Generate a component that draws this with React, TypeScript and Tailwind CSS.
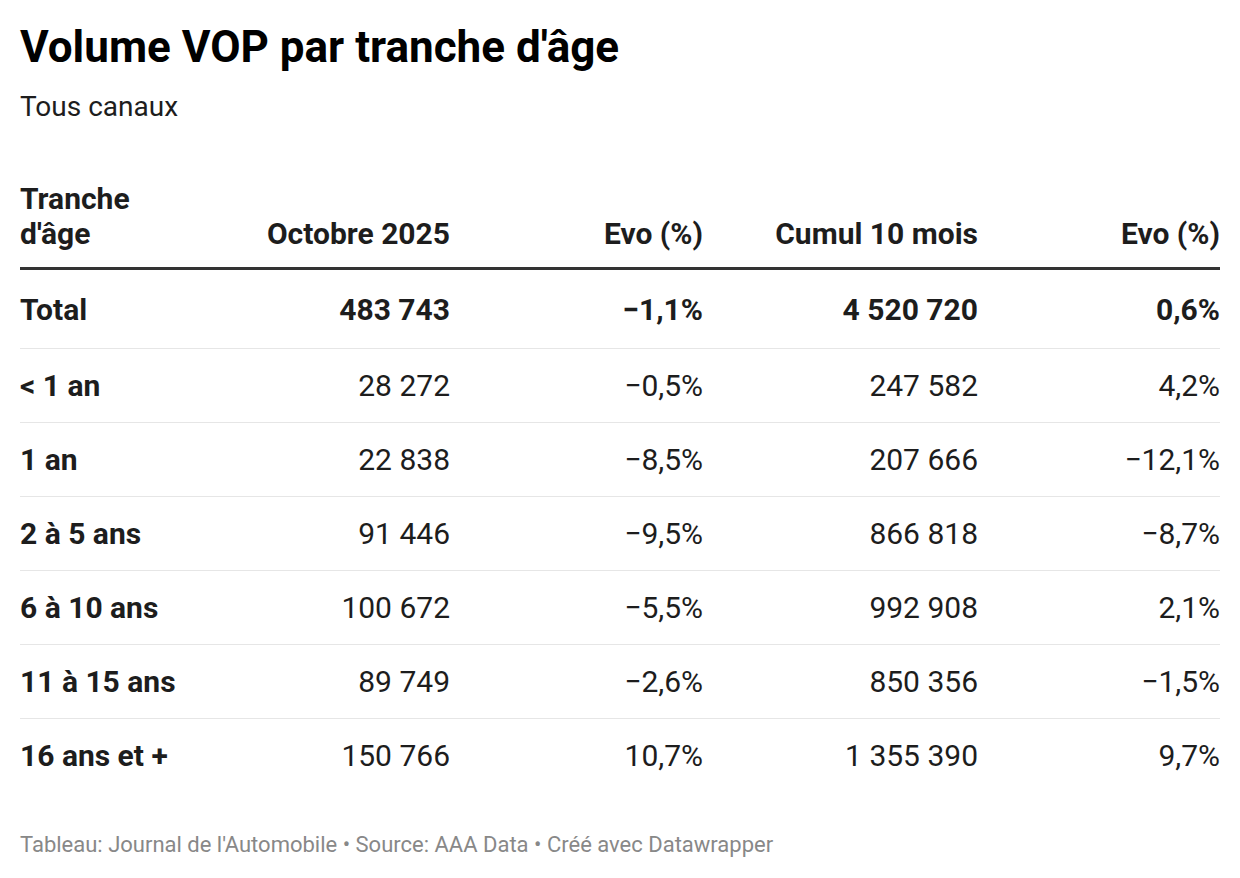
const ROWS = [
  { label: 'Total', oct: '483 743', evo: '−1,1%', cumul: '4 520 720', evo2: '0,6%', bold: true },
  { label: '< 1 an', oct: '28 272', evo: '−0,5%', cumul: '247 582', evo2: '4,2%' },
  { label: '1 an', oct: '22 838', evo: '−8,5%', cumul: '207 666', evo2: '−12,1%' },
  { label: '2 à 5 ans', oct: '91 446', evo: '−9,5%', cumul: '866 818', evo2: '−8,7%' },
  { label: '6 à 10 ans', oct: '100 672', evo: '−5,5%', cumul: '992 908', evo2: '2,1%' },
  { label: '11 à 15 ans', oct: '89 749', evo: '−2,6%', cumul: '850 356', evo2: '−1,5%' },
  { label: '16 ans et +', oct: '150 766', evo: '10,7%', cumul: '1 355 390', evo2: '9,7%' },
];

export default function App() {
  return (
    <div className="min-h-[878px] w-[1240px] bg-white px-5 pt-[23px] text-[#1d1d1d] font-['Roboto',sans-serif]">
      <h1 className="text-[44px] leading-[48px] font-bold text-black">Volume VOP par tranche d'âge</h1>
      <p className="mt-[20px] text-[28px] leading-[32px] text-[#1d1d1d]">Tous canaux</p>

      <table className="mt-[58px] w-[1200px] table-fixed border-collapse text-[30px]">
        <colgroup>
          <col className="w-[180px]" />
          <col className="w-[250px]" />
          <col className="w-[253px]" />
          <col className="w-[275px]" />
          <col className="w-[242px]" />
        </colgroup>
        <thead>
          <tr className="border-b-[3px] border-[#333333]">
            <th className="pb-[16px] text-left align-bottom font-bold leading-[35px]">Tranche<br />d'âge</th>
            <th className="pb-[16px] text-right align-bottom font-bold leading-[35px]">Octobre 2025</th>
            <th className="pb-[16px] text-right align-bottom font-bold leading-[35px]">Evo (%)</th>
            <th className="pb-[16px] text-right align-bottom font-bold leading-[35px]">Cumul 10 mois</th>
            <th className="pb-[16px] text-right align-bottom font-bold leading-[35px]">Evo (%)</th>
          </tr>
        </thead>
        <tbody>
          {ROWS.map((r, i) => (
            <tr key={r.label} className={i < ROWS.length - 1 ? 'border-b border-[#e6e6e6]' : ''}>
              <td className={`${i === 0 ? 'h-[80px]' : 'h-[74px]'} text-left font-bold`}>{r.label}</td>
              <td className={`text-right ${r.bold ? 'font-bold' : ''}`}>{r.oct}</td>
              <td className={`text-right ${r.bold ? 'font-bold' : ''}`}>{r.evo}</td>
              <td className={`text-right ${r.bold ? 'font-bold' : ''}`}>{r.cumul}</td>
              <td className={`text-right ${r.bold ? 'font-bold' : ''}`}>{r.evo2}</td>
            </tr>
          ))}
        </tbody>
      </table>

      <p className="mt-[38px] text-[22px] leading-[28px] text-[#888888]">
        Tableau: Journal de l'Automobile • Source: AAA Data • Créé avec Datawrapper
      </p>
    </div>
  );
}
